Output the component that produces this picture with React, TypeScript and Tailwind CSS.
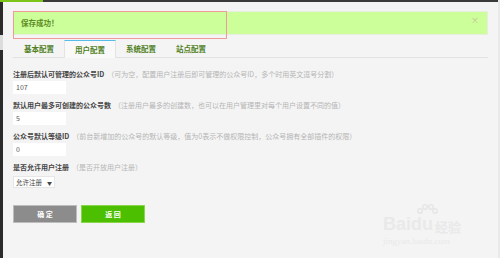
import React from "react";

const cjk = { fontFamily: '"Noto Sans CJK SC", "Noto Sans", sans-serif' };

function Field({ label, hint, value }: { label: string; hint: string; value: string }) {
  return (
    <div className="flex flex-col">
      <div className="flex items-center h-[10px] leading-none">
        <span className="text-[7px] font-bold text-[#444]">{label}</span>
        <span className="text-[7px] text-[#b5b5b5] ml-[3px]">{hint}</span>
      </div>
      <div className="mt-[2px] w-[53px] h-[13px] bg-white flex items-center pl-[3px] text-[7px] text-[#555] leading-none">
        {value}
      </div>
    </div>
  );
}

export default function App() {
  return (
    <div className="w-[500px] h-[258px] bg-[#f4f4f4] relative overflow-hidden flex" style={cjk}>
      {/* top bar */}
      <div className="absolute top-0 left-0 right-0 h-[2px] flex">
        <div className="w-[43px] bg-[#7cc518]" />
        <div className="flex-1 bg-[#3a3a3a]" />
      </div>
      {/* left strip */}
      <div className="w-[3px] flex flex-col shrink-0">
        <div className="h-[35px] bg-[#2b2b2b]" />
        <div className="h-[15px] bg-[#dcdcdc]" />
        <div className="flex-1 bg-[#2b2b2b]" />
      </div>
      <div className="flex-1 pl-[10px] pr-[12px] pt-[11px] flex flex-col">
        {/* alert */}
        <div className="relative h-[24px] bg-[#ccff99] border border-[#e6eedd] flex items-center pl-[7px]">
          <span className="text-[7.5px] font-bold text-[#5c8a24] leading-none">保存成功！</span>
          <span className="absolute right-[8px] top-[4px] text-[8px] text-[#c8b8a0] leading-none">×</span>
          <div className="absolute left-[-1px] top-[-1px] w-[214px] h-[28px] border border-[#f09a9a]" />
        </div>
        {/* tabs */}
        <div className="mt-[5px] h-[18px] border-b border-[#e2e2e2] flex items-stretch pl-[1px]">
          <div className="w-[50px] flex items-center justify-center text-[7.5px] font-bold text-[#4f7f22]">基本配置</div>
          <div className="w-[52px] flex items-center justify-center text-[7.5px] font-bold text-[#4f7f22] bg-[#f9f9f9] border-t border-t-[#56bde8] border-x border-x-[#e4e4e4] mb-[-1px]">用户配置</div>
          <div className="w-[50px] flex items-center justify-center text-[7.5px] font-bold text-[#4f7f22]">系统配置</div>
          <div className="w-[50px] flex items-center justify-center text-[7.5px] font-bold text-[#4f7f22]">站点配置</div>
        </div>
        {/* form */}
        <div className="mt-[11px] flex flex-col gap-[6px]">
          <Field label="注册后默认可管理的公众号ID" hint="（可为空，配置用户注册后即可管理的公众号ID，多个时用英文逗号分割）" value="107" />
          <Field label="默认用户最多可创建的公众号数" hint="（注册用户最多的创建数，也可以在用户管理里对每个用户设置不同的值）" value="5" />
          <Field label="公众号默认等级ID" hint="（前台新增加的公众号的默认等级，值为0表示不做权限控制，公众号拥有全部插件的权限）" value="0" />
          <div className="flex flex-col">
            <div className="flex items-center h-[10px] leading-none">
              <span className="text-[7px] font-bold text-[#444]">是否允许用户注册</span>
              <span className="text-[7px] text-[#b5b5b5] ml-[3px]">（是否开放用户注册）</span>
            </div>
            <div className="mt-[4px] w-[42px] h-[12px] bg-white border border-[#e6e6e6] flex items-center justify-between px-[2px] text-[6.5px] text-[#444] leading-none">
              <span>允许注册</span>
              <span className="text-[5px]">▼</span>
            </div>
          </div>
        </div>
        {/* buttons */}
        <div className="mt-[17px] flex gap-[4px]">
          <div className="w-[64px] h-[18px] bg-[#8c8c8c] border border-[#bdbdbd] flex items-center justify-center text-white text-[7px] font-bold">确 定</div>
          <div className="w-[64px] h-[18px] bg-[#4cbf00] border border-[#8ad64a] flex items-center justify-center text-white text-[7px] font-bold">返 回</div>
        </div>
      </div>
      {/* watermark */}
      <div className="absolute left-[383px] top-[204px] flex flex-col items-start text-[#e9e9e9] leading-none select-none">
        <svg width="24" height="14" viewBox="0 0 24 14" className="ml-[32px] mb-[-3px]" fill="none" stroke="#e6e6e6" strokeWidth="1.5">
          <circle cx="5" cy="7" r="2.2" />
          <circle cx="10" cy="3" r="2.2" />
          <circle cx="16" cy="3" r="2.2" />
          <circle cx="20" cy="7" r="2.2" />
        </svg>
        <div className="flex items-end">
          <span className="text-[18px] font-bold" style={{ fontFamily: '"Liberation Sans", sans-serif' }}>Baidu</span>
          <span className="text-[13px] font-bold ml-[2px]">经验</span>
        </div>
        <span className="text-[9px] mt-[4px]" style={{ fontFamily: '"Liberation Serif", serif' }}>jingyan.baidu.com</span>
      </div>
      <div className="absolute right-0 top-0 bottom-0 w-[2px] bg-[#e9e9e9]" />
    </div>
  );
}
